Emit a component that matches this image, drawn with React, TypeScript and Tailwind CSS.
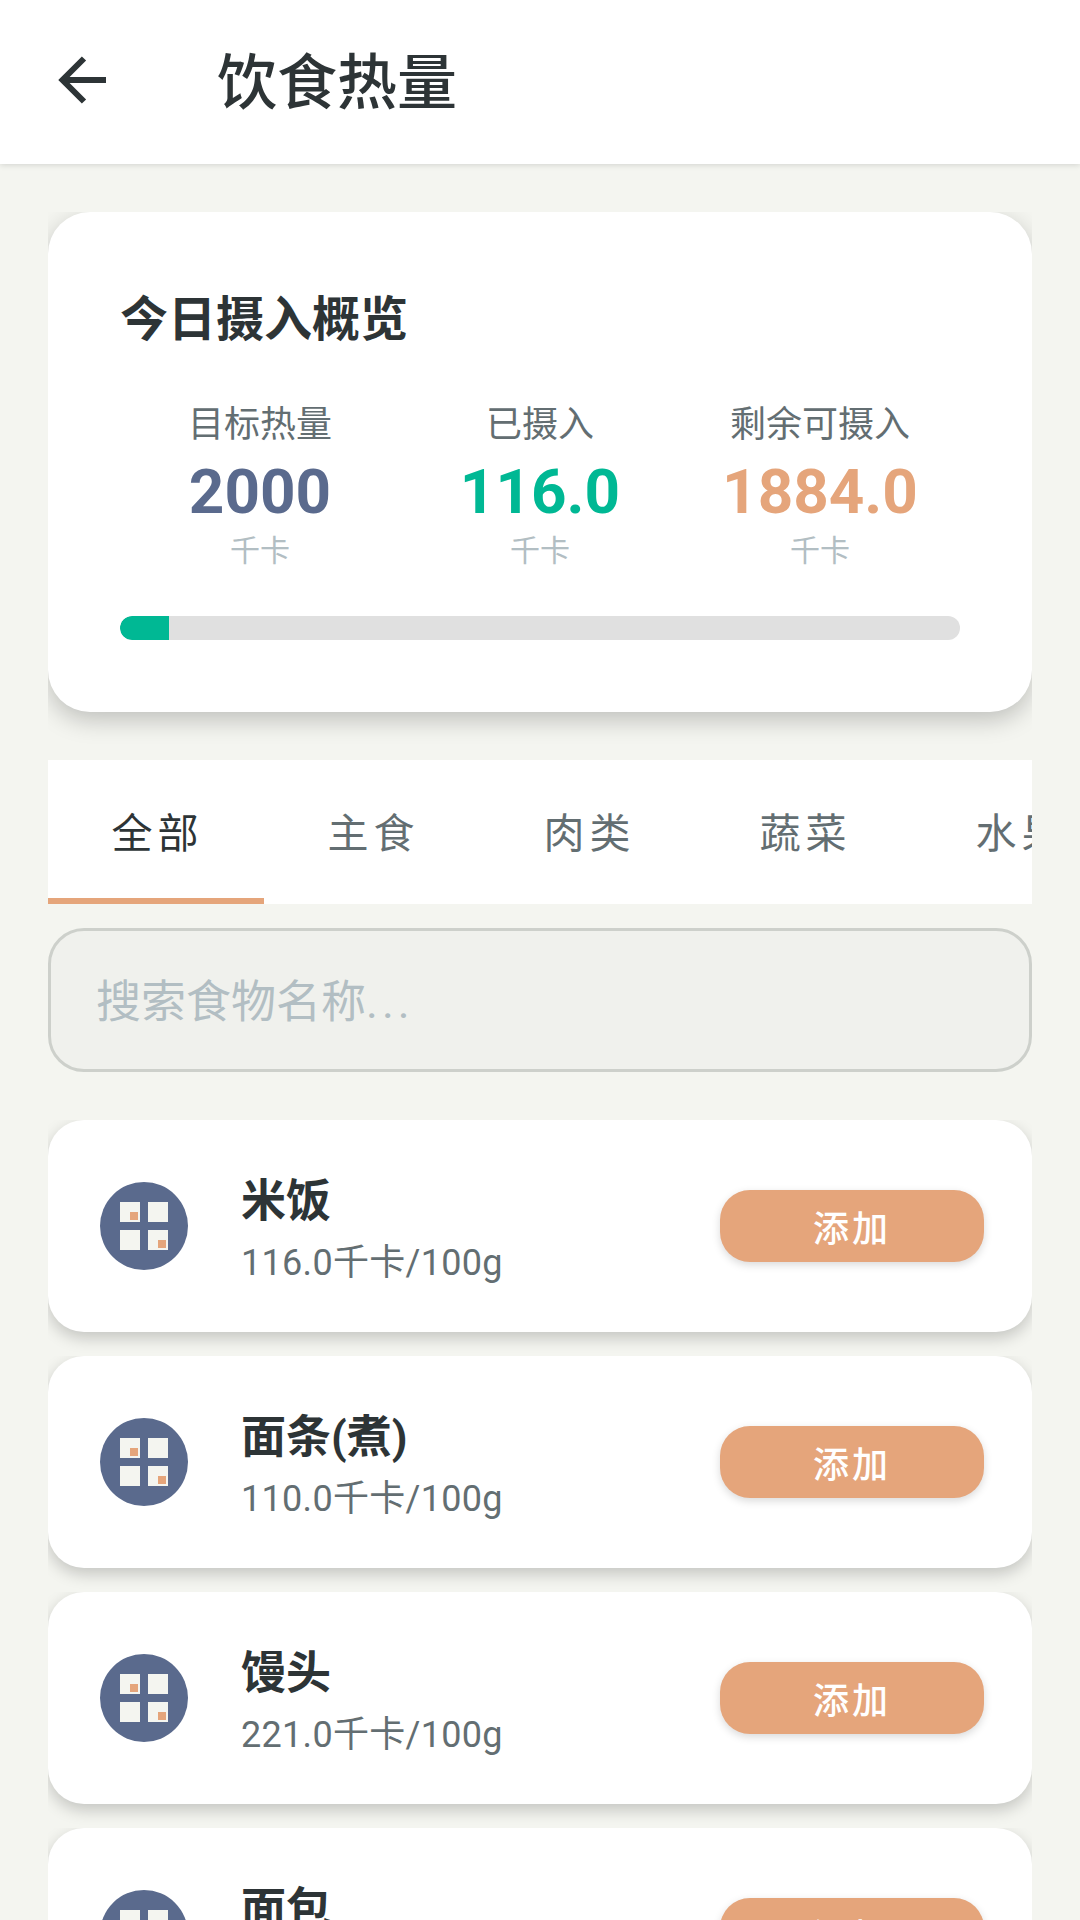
const foods = [
  { name: '米饭', kcal: '116.0千卡/100g' },
  { name: '面条(煮)', kcal: '110.0千卡/100g' },
  { name: '馒头', kcal: '221.0千卡/100g' },
  { name: '面包', kcal: '265.0千卡/100g' },
];

const stats = [
  { label: '目标热量', value: '2000', color: 'text-[#5a6a8d]' },
  { label: '已摄入', value: '116.0', color: 'text-[#00b894]' },
  { label: '剩余可摄入', value: '1884.0', color: 'text-[#e5a57b]' },
];

const tabs = ['全部', '主食', '肉类', '蔬菜', '水果'];

const FoodIcon = () => (
  <svg width="88" height="88" viewBox="0 0 88 88" className="shrink-0">
    <circle cx="44" cy="44" r="44" fill="#5a6a8d" />
    <rect x="20" y="20" width="20" height="20" fill="#f4f5f0" />
    <rect x="48" y="20" width="20" height="20" fill="#f4f5f0" />
    <rect x="20" y="48" width="20" height="20" fill="#f4f5f0" />
    <rect x="48" y="48" width="20" height="20" fill="#f4f5f0" />
    <rect x="30" y="30" width="8" height="8" fill="#e5a57b" />
    <rect x="58" y="58" width="8" height="8" fill="#e5a57b" />
  </svg>
);

const FoodCard = ({ name, kcal }: { name: string; kcal: string }) => (
  <div className="[clip-path:inset(0_0_-50px_0)]">
    <div className="h-[212px] rounded-[36px] bg-white shadow-[0_6px_16px_rgba(0,0,0,0.2)] flex items-center pl-[52px] pr-[48px]">
      <FoodIcon />
      <div className="ml-[53px] flex-1 mt-[7px]">
        <div className="text-[45px] leading-[60px] font-bold text-[#2d3436]">{name}</div>
        <div className="mt-[7px] text-[36px] leading-[48px] tracking-[0.3px] text-[#636e72]">{kcal}</div>
      </div>
      <button className="w-[264px] h-[72px] pt-[8px] rounded-[30px] bg-[#e5a57b] text-white text-[36px] tracking-[3px] font-medium shadow-[0_3px_8px_rgba(0,0,0,0.15)]">
        添加
      </button>
    </div>
  </div>
);

export default function App() {
  return (
    <div className="w-[1080px] h-[1920px] overflow-hidden bg-[#f4f5f0] font-['Roboto','Noto_Sans_CJK_SC',sans-serif]">
      <header className="h-[164px] bg-white flex items-center shadow-[0_1px_6px_rgba(0,0,0,0.14)] relative">
        <svg width="72" height="72" viewBox="0 0 72 72" className="ml-[48px] mb-[4px] shrink-0">
          <path d="M58 36H14M36 14.500L14.500 36L36 57.500" fill="none" stroke="#2d3436" strokeWidth="6" />
        </svg>
        <h1 className="ml-[97px] pt-[4px] text-[60px] font-medium text-[#2d3436]">饮食热量</h1>
      </header>

      <main className="px-[48px] pt-[48px]">
        <div className="[clip-path:inset(0_0_-60px_0)]">
          <section className="h-[500px] rounded-[42px] bg-white shadow-[0_8px_24px_rgba(0,0,0,0.22)] px-[72px] pt-[74px]">
            <h2 className="text-[48px] leading-[68px] font-bold text-[#2d3436]">今日摄入概览</h2>
            <div className="mt-[47px] grid grid-cols-3 text-center">
              {stats.map((s) => (
                <div key={s.label}>
                  <div className="text-[36px] leading-[48px] text-[#636e72]">{s.label}</div>
                  <div className={`mt-[1px] text-[62px] leading-[84px] font-bold ${s.color}`}>{s.value}</div>
                  <div className="text-[30px] leading-[34px] text-[#b2bec3]">千卡</div>
                </div>
              ))}
            </div>
            <div className="mt-[48px] h-[24px] rounded-full bg-[#e0e0e0] overflow-hidden">
              <div className="h-full bg-[#00b894] rounded-l-full" style={{ width: `${(116 / 2000) * 100}%` }} />
            </div>
          </section>
        </div>

        <nav className="mt-[48px] h-[144px] bg-white flex overflow-hidden">
          {tabs.map((t, i) => (
            <div
              key={t}
              className={`w-[216px] shrink-0 pt-[11px] pl-[3px] flex items-center justify-center text-[41px] tracking-[5px] border-b-[6px] ${
                i === 0 ? 'text-[#2d3436] border-[#e5a57b]' : 'text-[#636e72] border-transparent'
              }`}
            >
              {t}
            </div>
          ))}
        </nav>

        <div className="mt-[24px] h-[144px] rounded-[36px] border-[3px] border-[#cdd0cb] bg-[#f0f1ed] flex items-center pl-[45px] pt-[5px] text-[45px] text-[#b2bec3]">
          搜索食物名称<span className="tracking-[4px]">...</span>
        </div>

        <div className="mt-[48px] flex flex-col gap-[24px]">
          {foods.map((f) => (
            <FoodCard key={f.name} name={f.name} kcal={f.kcal} />
          ))}
        </div>
      </main>
    </div>
  );
}
